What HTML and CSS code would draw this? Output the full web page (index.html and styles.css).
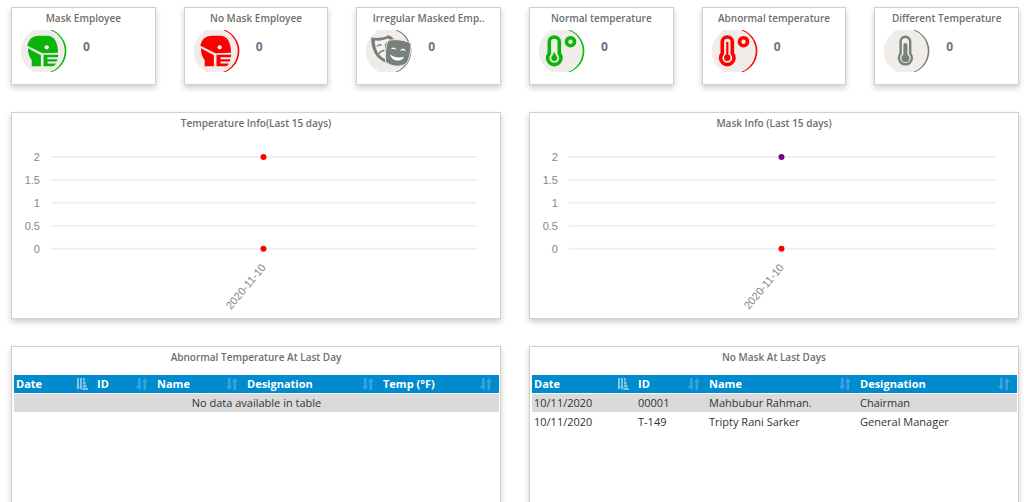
FILE: index.html
```html
<!DOCTYPE html>
<html lang="en">
<head>
<meta charset="utf-8">
<title>Employee Dashboard</title>
<link rel="stylesheet" href="styles.css">
</head>
<body>
<svg class="sprite" aria-hidden="true">
  <symbol id="disc" viewBox="0 0 46 42">
    <circle cx="22.7" cy="21" r="22.7" fill="currentColor"/>
    <circle cx="21.5" cy="21" r="22.2" fill="#fff"/>
    <circle cx="21.3" cy="21" r="21.7" fill="#efecea"/>
  </symbol>
  <symbol id="head" viewBox="0 0 46 42">
    <path fill="currentColor" d="M6.3 15.8C7.5 9 12 5.700 18 5.700H26.500C33 5.700 37 12 37 22.800L21.500 23.200Z"/>
    <path fill="currentColor" d="M7 18.200L19.900 25.300V36.200H10.700V30C8 27 6.800 22 7 18.200Z"/>
    <path fill="currentColor" d="M22.500 24.800H37.200L37 27.300H26.500V29.200H36.500L35.700 31.500H26.500V33.500H34.700C34.200 35.500 33 36.200 31 36.200H22.500Z"/>
    <circle cx="25.700" cy="17.300" r="2.100" fill="#fff"/>
  </symbol>
  <symbol id="sort" viewBox="0 0 12 12">
    <path fill="currentColor" d="M2 0H4.500V8H6L3.200 12L0 8H2ZM7.500 12H10V4H12L8.800 0L6 4H7.500Z"/>
  </symbol>
  <symbol id="sort-asc" viewBox="0 0 12 12">
    <path fill="currentColor" d="M1 0H3V8.500H4L2 12L0 8.500H1ZM4 0H6V8.500H7L5 12L3.500 9.500H4ZM7 0H8.700V3H7ZM7 3.500H9.600V6.500H7ZM7 7H10.600V9.500H7ZM6.500 10H12V12H6.500Z"/>
  </symbol>
</svg>
<main class="dashboard">
  <section class="stats">
    <article class="card">
      <h2 class="title">Mask Employee</h2>
      <div class="stat">
        <svg class="icon green" viewBox="0 0 46 42"><use href="#disc"/><use href="#head"/></svg>
        <span class="value">0</span>
      </div>
    </article>
    <article class="card">
      <h2 class="title">No Mask Employee</h2>
      <div class="stat">
        <svg class="icon red" viewBox="0 0 46 42"><use href="#disc"/><use href="#head"/></svg>
        <span class="value">0</span>
      </div>
    </article>
    <article class="card">
      <h2 class="title">Irregular Masked Emp..</h2>
      <div class="stat">
        <svg class="icon gray" viewBox="0 0 46 42"><use href="#disc"/>
          <path fill="currentColor" d="M5.300 7.500C12 8.500 18 7.500 22.500 5.200C25 6 27 7.500 28.500 9.500L21 33C10.500 30 4.500 19 5.300 7.500Z"/>
          <path fill="#f4f2f0" d="M8.800 10.500C14 11 18.500 10 22 8.500L24 9.500L19 14V29C12.500 26 8.800 19 8.800 10.500Z"/>
          <path fill="none" stroke="currentColor" stroke-width="1.500" d="M11 16.500C12 14.500 14 14.500 15.500 15.500M13 24C14 21.500 16 20.500 18.500 20.500"/>
          <path fill="currentColor" stroke="#efecea" stroke-width="1" d="M22 10.500C29 8.800 37 9.500 44.800 13C45.500 20 43.500 29 40.500 33.500C34 38 24 36.500 19.500 31.500C19 24 19.500 16 22 10.500Z"/>
          <path fill="#fff" d="M24.500 19.500C26.500 16.500 29.500 16.800 30.500 20C28.500 18.800 26.500 18.800 24.500 19.500ZM34 20.800C36 17.800 39 18.300 40 21.500C38 20 36 20 34 20.800ZM24 24.500C28 27.500 33 28 38 26.800C36 32.500 26 32 24 24.500Z"/>
        </svg>
        <span class="value">0</span>
      </div>
    </article>
    <article class="card">
      <h2 class="title">Normal temperature</h2>
      <div class="stat">
        <svg class="icon green" viewBox="0 0 46 42"><use href="#disc"/>
          <path fill="none" stroke="currentColor" stroke-width="3.600" d="M10.300 11.500A5 4.500 0 0 1 20.300 11.500V23.500A6.700 6.700 0 1 1 10.300 23.500Z"/>
          <path fill="currentColor" d="M15.300 22L17.500 26A3 3 0 1 1 13.100 26Z"/>
          <circle cx="31.500" cy="11.700" r="4" fill="none" stroke="currentColor" stroke-width="3.600"/>
        </svg>
        <span class="value">0</span>
      </div>
    </article>
    <article class="card">
      <h2 class="title">Abnormal temperature</h2>
      <div class="stat">
        <svg class="icon red" viewBox="0 0 46 42"><use href="#disc"/>
          <path fill="none" stroke="currentColor" stroke-width="3.600" d="M10.300 11.500A5 4.500 0 0 1 20.300 11.500V23.500A6.700 6.700 0 1 1 10.300 23.500Z"/>
          <path stroke="currentColor" stroke-width="2.200" d="M15.300 12V27"/>
          <circle cx="15.300" cy="27.700" r="3.200" fill="currentColor"/>
          <circle cx="31.500" cy="11.700" r="4" fill="none" stroke="currentColor" stroke-width="3.600"/>
        </svg>
        <span class="value">0</span>
      </div>
    </article>
    <article class="card">
      <h2 class="title">Different Temperature</h2>
      <div class="stat">
        <svg class="icon gray" viewBox="0 0 46 42"><use href="#disc"/>
          <path fill="none" stroke="currentColor" stroke-width="2.400" d="M16.600 11.500A4.800 4.800 0 0 1 26.200 11.500V23.500A6.500 6.500 0 1 1 16.600 23.500Z"/>
          <path stroke="currentColor" stroke-width="4" stroke-linecap="round" d="M21.400 15V27"/>
          <circle cx="21.400" cy="28.200" r="4" fill="currentColor"/>
        </svg>
        <span class="value">0</span>
      </div>
    </article>
  </section>

  <section class="panels">
    <article class="card">
      <h2 class="title">Temperature Info(Last 15 days)</h2>
      <svg class="chart" viewBox="0 0 489 186" role="img" aria-label="Temperature info, last 15 days">
        <path class="grid-line" d="M39 25H466M39 48H466M39 71H466M39 94H466M39 117H466"/>
        <g class="axis">
          <text x="28" y="29">2</text><text x="28" y="52">1.5</text><text x="28" y="75">1</text><text x="28" y="98">0.5</text><text x="28" y="121">0</text>
          <text transform="translate(255 136) rotate(-50)">2020-11-10</text>
        </g>
        <circle cx="252" cy="25" r="3" fill="#f00"/><circle cx="252" cy="117" r="3" fill="#f00"/>
      </svg>
    </article>
    <article class="card">
      <h2 class="title">Mask Info (Last 15 days)</h2>
      <svg class="chart" viewBox="0 0 489 186" role="img" aria-label="Mask info, last 15 days">
        <path class="grid-line" d="M39 25H466M39 48H466M39 71H466M39 94H466M39 117H466"/>
        <g class="axis">
          <text x="28" y="29">2</text><text x="28" y="52">1.5</text><text x="28" y="75">1</text><text x="28" y="98">0.5</text><text x="28" y="121">0</text>
          <text transform="translate(255 136) rotate(-50)">2020-11-10</text>
        </g>
        <circle cx="252" cy="25" r="3" fill="#800080"/><circle cx="252" cy="117" r="3" fill="#f00"/>
      </svg>
    </article>
  </section>

  <section class="panels">
    <article class="card list">
      <h2 class="title">Abnormal Temperature At Last Day</h2>
      <table class="table">
        <colgroup><col class="c-81"><col class="c-60"><col class="c-90"><col class="c-136"><col class="c-118"></colgroup>
        <thead><tr>
          <th><button class="sort active">Date<svg class="arrows"><use href="#sort-asc"/></svg></button></th>
          <th><button class="sort">ID<svg class="arrows"><use href="#sort"/></svg></button></th>
          <th><button class="sort">Name<svg class="arrows"><use href="#sort"/></svg></button></th>
          <th><button class="sort">Designation<svg class="arrows"><use href="#sort"/></svg></button></th>
          <th><button class="sort">Temp (°F)<svg class="arrows"><use href="#sort"/></svg></button></th>
        </tr></thead>
        <tbody><tr><td class="empty" colspan="5">No data available in table</td></tr></tbody>
      </table>
    </article>
    <article class="card list">
      <h2 class="title">No Mask At Last Days</h2>
      <table class="table">
        <colgroup><col class="c-104"><col class="c-71"><col class="c-151"><col class="c-159"></colgroup>
        <thead><tr>
          <th><button class="sort active">Date<svg class="arrows"><use href="#sort-asc"/></svg></button></th>
          <th><button class="sort">ID<svg class="arrows"><use href="#sort"/></svg></button></th>
          <th><button class="sort">Name<svg class="arrows"><use href="#sort"/></svg></button></th>
          <th><button class="sort">Designation<svg class="arrows"><use href="#sort"/></svg></button></th>
        </tr></thead>
        <tbody>
          <tr><td>10/11/2020</td><td>00001</td><td>Mahbubur Rahman.</td><td>Chairman</td></tr>
          <tr><td>10/11/2020</td><td>T-149</td><td>Tripty Rani Sarker</td><td>General Manager</td></tr>
        </tbody>
      </table>
    </article>
  </section>
</main>
</body>
</html>
```
FILE: styles.css
```css
* { box-sizing: border-box; }
body {
  margin: 0;
  background: #fff;
  color: #333;
  font-family: "Open Sans", "Noto Sans", sans-serif;
  font-size: 11px;
}
.sprite { display: none; }
.dashboard {
  display: flex;
  flex-direction: column;
  gap: 27px;
  height: 100vh;
  overflow: hidden;
  padding: 7px 5px 0 11px;
}
.stats, .panels { display: grid; gap: 28px; flex: none; }
.stats { grid-template-columns: repeat(6, minmax(0, 1fr)); }
.panels { grid-template-columns: repeat(2, minmax(0, 1fr)); }
.card {
  border: 1px solid #d0d0d0;
  background: #fff;
  box-shadow: 0 3px 6px rgba(0, 0, 0, 0.2);
}
.title {
  margin: 0;
  padding: 2px 0 1px;
  color: #6e6e6e;
  font-size: 10px;
  line-height: 16px;
  font-weight: 600;
  text-align: center;
  white-space: nowrap;
}
.stat {
  display: flex;
  gap: 16px;
  padding: 3px 9px 12px;
}
.icon { width: 46px; height: 42px; }
.green { color: #0ab50a; }
.red { color: #f00; }
.gray { color: #77807a; }
.value {
  padding-top: 8px;
  color: #6d7088;
  font-size: 12px;
  line-height: 18px;
  font-weight: 700;
}
.chart { display: block; width: 100%; }
.grid-line { fill: none; stroke: #efefef; stroke-width: 2; }
.axis {
  fill: #858585;
  font-family: "Liberation Sans", Arial, sans-serif;
  font-size: 11px;
  text-anchor: end;
}
.list { min-height: 206px; padding: 0 2px; }
.table {
  width: 100%;
  margin-top: 9px;
  border-collapse: collapse;
  table-layout: fixed;
}
.c-81 { width: 81px; }
.c-60 { width: 60px; }
.c-90 { width: 90px; }
.c-136 { width: 136px; }
.c-118 { width: 118px; }
.c-104 { width: 104px; }
.c-71 { width: 71px; }
.c-151 { width: 151px; }
.c-159 { width: 159px; }
.table th { padding: 0; background: #008bce; }
.sort {
  display: flex;
  align-items: center;
  justify-content: space-between;
  width: 100%;
  height: 18px;
  padding: 0 7px 0 2px;
  border: 0;
  background: none;
  color: #fff;
  font: inherit;
  font-weight: 700;
  cursor: pointer;
}
.arrows { width: 12px; height: 12px; opacity: 0.22; }
.active .arrows { opacity: 0.5; }
.table td {
  height: 19px;
  padding: 0 2px;
  border-top: 1px solid #fff;
  line-height: 18px;
}
.table tbody tr:nth-child(odd) { background: #dadada; }
.table .empty { text-align: center; }
```
